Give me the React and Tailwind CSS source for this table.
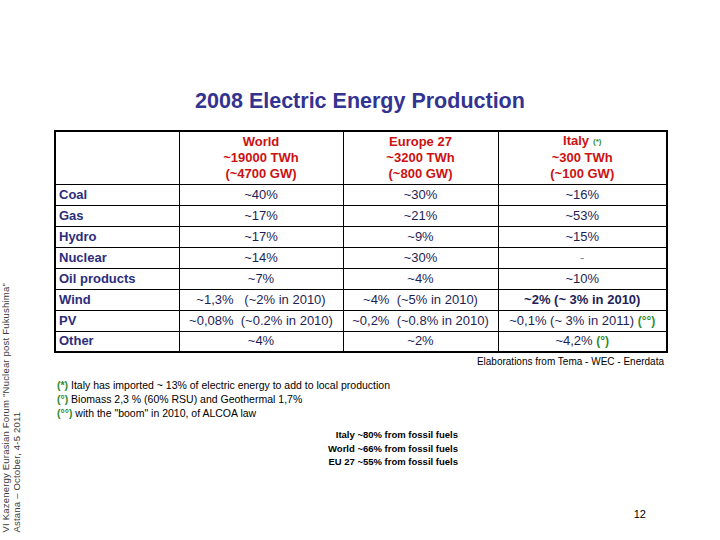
import React from "react";

const rows = [
  { label: "Coal", world: "~40%", eu: "~30%", it: "~16%" },
  { label: "Gas", world: "~17%", eu: "~21%", it: "~53%" },
  { label: "Hydro", world: "~17%", eu: "~9%", it: "~15%" },
  { label: "Nuclear", world: "~14%", eu: "~30%", it: "-" },
  { label: "Oil products", world: "~7%", eu: "~4%", it: "~10%" },
  { label: "Wind", world: "~1,3%   (~2% in 2010)", eu: "~4%  (~5% in 2010)", it: "~2% (~ 3% in 2010)", itBold: true },
  { label: "PV", world: "~0,08%  (~0.2% in 2010)", eu: "~0,2%  (~0.8% in 2010)", it: "~0,1% (~ 3% in 2011) ", itNote: "(°°)" },
  { label: "Other", world: "~4%", eu: "~2%", it: "~4,2% ", itNote: "(°)" },
];

const headers = [
  { name: "World", total: "~19000 TWh", power: "(~4700 GW)" },
  { name: "Europe 27", total: "~3200 TWh", power: "(~800 GW)" },
  { name: "Italy", note: "(*)", total: "~300 TWh", power: "(~100 GW)" },
];

function Cell({ children, className = "" }) {
  return (
    <td className={`border border-black text-center align-middle whitespace-pre text-[13px] leading-[16px] text-[#1e1e55] ${className}`}>
      {children}
    </td>
  );
}

export default function App() {
  return (
    <div className="w-[720px] h-[540px] bg-white flex font-['Liberation_Sans',Arial,sans-serif] overflow-hidden">
      <div className="w-[54px] shrink-0 flex items-end pl-[1px] pb-[8px]">
        <div className="[writing-mode:vertical-rl] rotate-180 text-[9.5px] leading-[10.5px] tracking-[0.2px] text-[#3a3a3a]">
          <div>VI Kazenergy Eurasian Forum "Nuclear post Fukushima"</div>
          <div>Astana – October, 4-5 2011</div>
        </div>
      </div>

      <div className="flex-1 flex flex-col pt-[89px]">
        <h1 className="w-[612px] text-center text-[21.5px] leading-[25px] font-bold text-[#333391] mb-[16px]">
          2008 Electric Energy Production
        </h1>

        <table className="w-[612px] table-fixed border-collapse border-2 border-black">
          <colgroup>
            <col className="w-[124px]" />
            <col className="w-[164px]" />
            <col className="w-[155px]" />
            <col className="w-[169px]" />
          </colgroup>
          <thead>
            <tr className="h-[53px]">
              <th className="border border-black"></th>
              {headers.map((h) => (
                <th key={h.name} className="border border-black text-center font-bold text-[13px] leading-[16px] text-[#cc1111]">
                  <div>
                    {h.name}
                    {h.note && <span className="ml-[4px] text-[8px] text-[#2e8b2e] align-middle">{h.note}</span>}
                  </div>
                  <div>{h.total}</div>
                  <div>{h.power}</div>
                </th>
              ))}
            </tr>
          </thead>
          <tbody>
            {rows.map((r) => (
              <tr key={r.label} className="h-[21px]">
                <td className="border border-black pl-[3px] text-left font-bold text-[13px] leading-[16px] text-[#2d2d7c]">
                  {r.label}
                </td>
                <Cell>{r.world}</Cell>
                <Cell>{r.eu}</Cell>
                <Cell className={r.itBold ? "font-bold" : r.it === "-" ? "text-[#888]" : ""}>
                  {r.it}
                  {r.itNote && <span className="font-bold text-[#2e8b2e] text-[12px]">{r.itNote}</span>}
                </Cell>
              </tr>
            ))}
          </tbody>
        </table>

        <div className="w-[612px] text-right text-[10px] leading-[12px] text-black mt-[3px] pr-[2px]">
          Elaborations from Tema - WEC - Enerdata
        </div>

        <div className="mt-[10px] pl-[3px] text-[10.5px] leading-[14px] text-black">
          <div>
            <span className="font-bold text-[#2e8b2e]">(*)</span> Italy has imported ~ 13% of electric energy to add to local production
          </div>
          <div>
            <span className="font-bold text-[#2e8b2e]">(°)</span> Biomass 2,3 % (60% RSU) and Geothermal 1,7%
          </div>
          <div>
            <span className="font-bold text-[#2e8b2e]">(°°)</span> with the "boom" in 2010, of ALCOA law
          </div>
        </div>

        <div className="mt-[8px] w-[404px] text-right text-[9.5px] leading-[13.5px] font-bold text-black">
          <div>Italy ~80% from fossil fuels</div>
          <div>World ~66% from fossil fuels</div>
          <div>EU 27 ~55% from fossil fuels</div>
        </div>

        <div className="mt-auto flex justify-end pr-[74px] pb-[19px] text-[11px] leading-[14px] text-black">
          12
        </div>
      </div>
    </div>
  );
}
